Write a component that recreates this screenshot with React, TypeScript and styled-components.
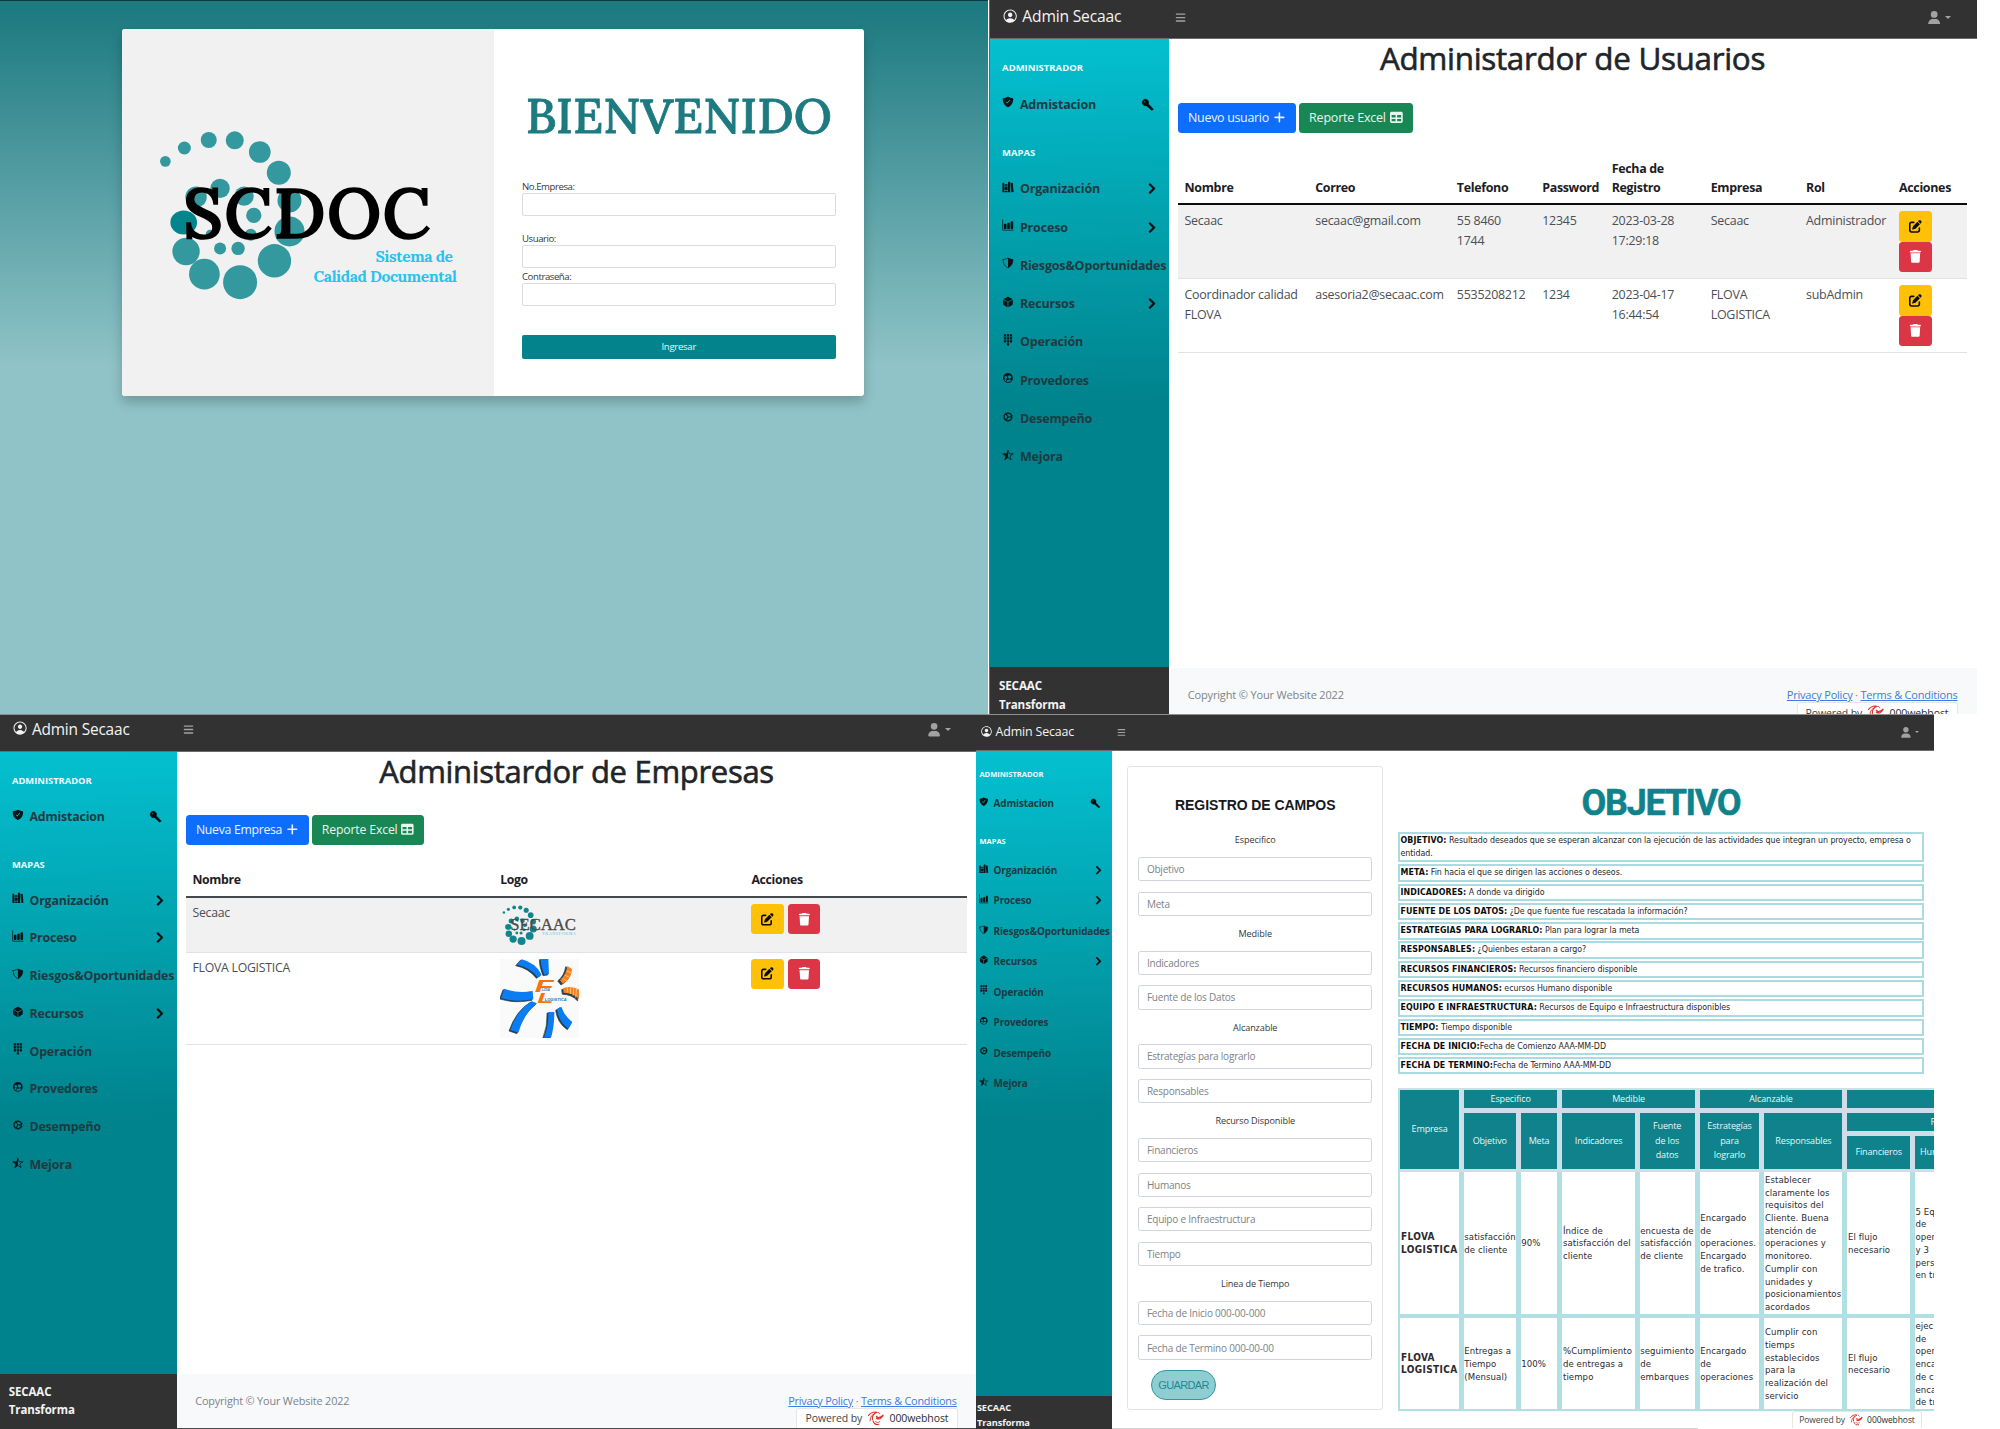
import React from 'react';
import styled, { createGlobalStyle, css } from 'styled-components';
import {
  IoShieldCheckmark, IoLibrarySharp, IoBarChart, IoShieldHalf, IoCube, IoKeypadSharp,
  IoPeopleCircle, IoCog, IoStarHalf, IoKey, IoPersonCircleOutline,
} from 'react-icons/io5';
import { FaTrash, FaPenToSquare, FaTable, FaPlus, FaUser, FaBars, FaAngleRight } from 'react-icons/fa6';

/* One design pixel of the panel it is used in; every Screen sets --u. */
const u = (n: number) => `calc(var(--u) * ${n})`;

const sans = `'Open Sans', 'Noto Sans', sans-serif`;
const serif = `Lora, 'Noto Serif', serif`;
const arial = `'Liberation Sans', Arial, sans-serif`;
const tahoma = `'DejaVu Sans Condensed', 'DejaVu Sans', sans-serif`;

const GlobalStyle = createGlobalStyle`
  *, *::before, *::after { box-sizing: border-box; }
  body { margin: 0; background: #fff; font-family: ${sans}; }
  svg { display: block; flex: none; }
`;

const Board = styled.div`
  width: 2000px;
  height: 1429px;
  display: flex;
  flex-direction: column;
  overflow: hidden;
  background: #fff;
`;

const BoardRow = styled.div<{ $h: number }>`
  display: flex;
  height: ${(p) => p.$h}px;
`;

/* ---------- Login ---------- */

const LoginPage = styled.section`
  width: 988px;
  height: 100%;
  padding: 28px 0 0 121.5px;
  border-top: 1px solid #0c3b3d;
  background: linear-gradient(180deg, #1c7a80 0, #1c7a80 8px, #8fc3c7 365px);
`;

const LoginCard = styled.div`
  display: flex;
  width: 742.5px;
  height: 367px;
  border-radius: 3px;
  overflow: hidden;
  background: #fff;
  box-shadow: 0 6px 12px rgba(0, 0, 0, 0.22);
`;

const LogoPane = styled.div`
  width: 372px;
  padding: 102px 0 0 38.5px;
  background: #f1f1f1;
`;

const FormPane = styled.form`
  flex: 1;
  display: flex;
  flex-direction: column;
  padding: 54.5px 28.5px 0 28.5px;
`;

const Welcome = styled.h1`
  margin: 0 0 34px;
  font: 500 48.5px/62px ${serif};
  color: #1c7a80;
  text-align: center;
  white-space: nowrap;
  letter-spacing: 0;
  -webkit-text-stroke: 0.8px #1c7a80;
`;

const Label = styled.label`
  font-size: 9.6px;
  line-height: 13px;
  height: 13.4px;
  letter-spacing: -0.045em;
  color: #33393e;
`;

const LoginInput = styled.input<{ $gap: number }>`
  height: 23px;
  margin: 0 0 ${(p) => p.$gap}px;
  border: 1px solid #d8dddf;
  border-radius: 2px;
  background: #fff;
  outline: none;
`;

const EnterButton = styled.button`
  height: 24px;
  padding: 0;
  border: 0;
  border-radius: 2px;
  background: #03848c;
  color: #e9f6f7;
  font: 400 9.6px/24px ${sans};
  letter-spacing: -0.03em;
`;

const SPIRAL: [number, number, number][] = [
  [196, 486, 16], [253, 446, 19.5], [326, 422, 24], [404, 423, 27], [479, 458, 32.5], [536, 520, 36],
  [568, 603, 36], [568, 696, 45], [523, 784, 50], [420, 848, 51], [313, 824, 46], [258, 756, 41],
  [288, 593, 32], [360, 567, 29], [432, 590, 29], [461, 648, 23], [452, 706, 18], [414, 747, 20],
  [360, 747, 18], [330, 704, 13],
];

const Spiral = ({ color, accent }: { color: string; accent: string }) => (
  <g fill={color}>
    {SPIRAL.map(([cx, cy, r]) => <circle key={`${cx}-${cy}`} cx={cx} cy={cy} r={r} />)}
    <ellipse cx={251} cy={669} rx={40} ry={36} fill={accent} />
  </g>
);

const ScdocLogo = () => (
  <svg width="297" height="168.5" viewBox="180 395 890 505">
    <Spiral color="#33999f" accent="#03858d" />
    <text x="249" y="715" fontFamily="Lora, serif" fontSize="207" fontWeight="500" textLength="742" fill="#000" stroke="#000" strokeWidth="5">SCDOC</text>
    <text x="826" y="787" fontFamily="Lora, serif" fontSize="47" fontWeight="700" textLength="232" fill="#29c1f2">Sistema de</text>
    <text x="640" y="848" fontFamily="Lora, serif" fontSize="47" fontWeight="700" textLength="430" fill="#29c1f2">Calidad Documental</text>
  </svg>
);

const Login = () => (
  <LoginPage>
    <LoginCard>
      <LogoPane><ScdocLogo /></LogoPane>
      <FormPane>
        <Welcome>BIENVENIDO</Welcome>
        <Label>No.Empresa:</Label>
        <LoginInput $gap={15.8} />
        <Label>Usuario:</Label>
        <LoginInput $gap={1.6} />
        <Label>Contraseña:</Label>
        <LoginInput $gap={29} />
        <EnterButton type="button">Ingresar</EnterButton>
      </FormPane>
    </LoginCard>
  </LoginPage>
);

/* ---------- Admin shell ---------- */

const Screen = styled.section<{ $u: number; $w: number; $line?: boolean; $edge?: string }>`
  --u: ${(p) => p.$u}px;
  width: ${(p) => p.$w}px;
  height: 100%;
  display: flex;
  flex-direction: column;
  overflow: hidden;
  background: #fff;
  font-family: ${sans};
  ${(p) => p.$line && css`border-top: 1px solid #8f8f8f;`}
  ${(p) => p.$edge && css`border-left: 1px solid ${p.$edge};`}
`;

const TopBar = styled.header<{ $h: number; $lift: number; $crop: number }>`
  flex: none;
  display: flex;
  align-items: center;
  height: ${(p) => p.$h}px;
  padding: 0 ${(p) => u(32 - p.$crop * 0.8)} ${(p) => p.$lift}px ${(p) => u(15.5 - p.$crop)};
  background: #323232;
  border-bottom: 1px solid #6b6b6b;
  color: #a2a2a2;
`;

const Brand = styled.div`
  display: flex;
  align-items: center;
  width: ${u(217)};
  gap: ${u(4.6)};
  color: #f4f4f4;
  font-size: ${u(19.6)};
  letter-spacing: -0.012em;
  line-height: 1;
  white-space: nowrap;
  & > svg { width: ${u(20.5)}; height: ${u(20.5)}; margin-bottom: ${u(4)}; }
`;

const MenuToggle = styled.div`
  flex: 1;
  font-size: ${u(14)};
`;

const UserMenu = styled.div`
  display: flex;
  align-items: center;
  gap: ${u(6)};
  & > svg { width: ${u(15.5)}; height: ${u(17)}; }
`;

const Caret = styled.i`
  border: ${u(4.4)} solid transparent;
  border-top-color: currentColor;
  border-bottom: 0;
`;

const ScreenBody = styled.div`
  flex: 1;
  min-height: 0;
  display: flex;
`;

const Sidebar = styled.nav<{ $w: number }>`
  flex: none;
  width: ${(p) => p.$w}px;
  display: flex;
  flex-direction: column;
  background: linear-gradient(178deg, #04c0d0 0, #00838d 54%, #00838d 100%);
`;

const NavHeading = styled.div<{ $crop: number }>`
  padding: ${u(28)} 0 ${u(12)} ${(p) => u(15.2 - p.$crop)};
  font-size: ${u(11.9)};
  font-weight: 700;
  line-height: ${u(18)};
  color: #f2fdfe;
`;

const NavLink = styled.a<{ $crop: number }>`
  display: flex;
  align-items: center;
  height: ${u(48)};
  padding: 0 ${u(14)} 0 ${(p) => u(15.3 - p.$crop)};
  font-size: ${u(15.7)};
  font-weight: 700;
  letter-spacing: -0.014em;
  white-space: nowrap;
  color: #1f3a3f;
`;

const NavIcon = styled.span`
  width: ${u(22.2)};
  flex: none;
  padding-bottom: ${u(5)};
  font-size: ${u(15)};
  color: #0b1416;
`;

const NavArrow = styled.span<{ $turn?: boolean }>`
  margin-left: auto;
  color: #04080a;
  font-size: ${(p) => u(p.$turn ? 17 : 16.5)};
  ${(p) => p.$turn && css`transform: rotate(-90deg); margin-right: ${u(4)};`}
  & > svg { stroke: currentColor; stroke-width: 24; }
`;

const SideFooter = styled.div<{ $h: number; $pad: number; $crop: number }>`
  flex: none;
  height: ${(p) => p.$h}px;
  margin-top: auto;
  padding: ${(p) => p.$pad}px 0 0 ${(p) => u(11.2 - p.$crop)};
  overflow: hidden;
  background: #323232;
  color: #f3f3f3;
  font-size: ${u(14.6)};
  font-weight: 700;
  line-height: ${u(23.4)};
  letter-spacing: -0.01em;
`;

const Main = styled.main`
  flex: 1;
  min-width: 0;
  display: flex;
  flex-direction: column;
  position: relative;
`;

const LINKS = [
  { label: 'Organización', Icon: IoLibrarySharp, arrow: true },
  { label: 'Proceso', Icon: IoBarChart, arrow: true },
  { label: 'Riesgos&Oportunidades', Icon: IoShieldHalf, arrow: false },
  { label: 'Recursos', Icon: IoCube, arrow: true },
  { label: 'Operación', Icon: IoKeypadSharp, arrow: false },
  { label: 'Provedores', Icon: IoPeopleCircle, arrow: false },
  { label: 'Desempeño', Icon: IoCog, arrow: false },
  { label: 'Mejora', Icon: IoStarHalf, arrow: false },
];

interface ShellProps {
  unit: number;
  width: number;
  bar: number;
  lift: number;
  side: number;
  foot: number;
  footPad: number;
  crop?: number;
  line?: boolean;
  edge?: string;
  children: React.ReactNode;
}

const AdminShell = ({ unit, width, bar, lift, side, foot, footPad, crop = 0, line, edge, children }: ShellProps) => (
  <Screen $u={unit} $w={width} $line={line} $edge={edge}>
    <TopBar $h={bar} $lift={lift} $crop={crop}>
      <Brand><IoPersonCircleOutline />Admin Secaac</Brand>
      <MenuToggle><FaBars /></MenuToggle>
      <UserMenu><FaUser /><Caret /></UserMenu>
    </TopBar>
    <ScreenBody>
      <Sidebar $w={side}>
        <NavHeading $crop={crop}>ADMINISTRADOR</NavHeading>
        <NavLink $crop={crop}>
          <NavIcon><IoShieldCheckmark /></NavIcon>Admistacion
          <NavArrow $turn><IoKey /></NavArrow>
        </NavLink>
        <NavHeading $crop={crop}>MAPAS</NavHeading>
        {LINKS.map(({ label, Icon, arrow }) => (
          <NavLink key={label} $crop={crop}>
            <NavIcon><Icon /></NavIcon>{label}
            {arrow && <NavArrow><FaAngleRight /></NavArrow>}
          </NavLink>
        ))}
        <SideFooter $h={foot} $pad={footPad} $crop={crop}>SECAAC<br />Transforma</SideFooter>
      </Sidebar>
      <Main>{children}</Main>
    </ScreenBody>
  </Screen>
);

/* ---------- Shared content ---------- */

const Content = styled.div<{ $left: number; $right: number }>`
  flex: 1;
  min-height: 0;
  padding: 0 ${(p) => p.$right}px 0 ${(p) => p.$left}px;
`;

const Title = styled.h1`
  margin: 0 0 ${u(31.2)};
  font-size: ${u(39.4)};
  font-weight: 500;
  line-height: ${u(48.5)};
  letter-spacing: -0.01em;
  text-align: center;
  color: #212529;
  -webkit-text-stroke: 0.6px #212529;
`;

const Toolbar = styled.div<{ $gap: number }>`
  display: flex;
  gap: 3.4px;
  margin-bottom: ${(p) => p.$gap}px;
`;

const tones = {
  blue: ['#0d6efd', '#eaf2ff'],
  green: ['#198754', '#eaf5ef'],
  yellow: ['#ffc107', '#0b0b0b'],
  red: ['#dc3545', '#fff'],
};

const Button = styled.button<{ $tone: keyof typeof tones }>`
  display: inline-flex;
  align-items: center;
  gap: ${u(5)};
  height: ${u(38)};
  padding: 0 ${u(12.6)};
  border: 0;
  border-radius: ${u(4.5)};
  background: ${(p) => tones[p.$tone][0]};
  color: ${(p) => tones[p.$tone][1]};
  font-family: ${sans};
  font-size: ${u(15.6)};
  letter-spacing: ${(p) => (p.$tone === 'green' ? '-0.014em' : '-0.024em')};
  white-space: nowrap;
  & > svg { font-size: ${u(16)}; }
`;

const GridRow = styled.div<{ $cols: string; $kind?: 'head' | 'odd' | 'even'; $rule?: string }>`
  display: grid;
  grid-template-columns: ${(p) => p.$cols};
  font-size: ${u(15.6)};
  line-height: ${u(24)};
  letter-spacing: -0.02em;
  white-space: pre;
  color: #4a4f54;
  border-bottom: 1px solid #dfe2e6;
  background: ${(p) => (p.$kind === 'odd' ? '#f1f1f1' : 'transparent')};
  ${(p) => p.$kind === 'head' && css`
    align-items: end;
    font-weight: 700;
    letter-spacing: -0.026em;
    color: #1c2024;
    border-bottom: 2px solid ${p.$rule};
  `}
`;

const Cell = styled.div`
  padding: ${u(7.6)} ${u(7.6)} ${u(8)} ${u(8.2)};
`;

const Actions = styled.div<{ $stack?: boolean }>`
  display: flex;
  flex-direction: ${(p) => (p.$stack ? 'column' : 'row')};
  align-items: flex-start;
  gap: ${(p) => (p.$stack ? '0' : '3.3px')};
  & > :first-child > svg { margin-right: ${u(0.8)}; }
`;

const RowActions = ({ stack }: { stack?: boolean }) => (
  <Actions $stack={stack}>
    <Button $tone="yellow"><FaPenToSquare /></Button>
    <Button $tone="red"><FaTrash /></Button>
  </Actions>
);

const PageFooter = styled.footer<{ $h: number }>`
  flex: none;
  display: flex;
  justify-content: space-between;
  height: ${(p) => p.$h}px;
  padding: ${u(26.6)} ${u(24.5)} 0 ${u(23.5)};
  overflow: hidden;
  background: #f8f9fa;
  font-size: ${u(13.8)};
  line-height: ${u(15)};
  letter-spacing: -0.014em;
  color: #7d8489;
  & span + span { letter-spacing: -0.02em; }
  & a { color: #3f7be0; text-decoration: underline; text-underline-offset: 1px; }
`;

/* The hosting badge floats over the bottom-right corner of the page. */
const HostBadge = styled.div<{ $right: number; $bottom: number; $w: number; $fs: number }>`
  position: absolute;
  right: ${(p) => p.$right}px;
  bottom: ${(p) => p.$bottom}px;
  display: flex;
  align-items: center;
  justify-content: center;
  gap: ${(p) => p.$fs * 0.45}px;
  width: ${(p) => p.$w}px;
  height: ${(p) => p.$fs * 1.95}px;
  border: 1px solid #e6e6e6;
  border-bottom: 0;
  border-radius: 3px 3px 0 0;
  background: #fff;
  font-size: ${(p) => p.$fs}px;
  line-height: 1;
  letter-spacing: -0.01em;
  white-space: nowrap;
  color: #444;
  & b { font-weight: 500; color: #2c2c2c; }
`;

const HostMark = ({ size }: { size: number }) => (
  <svg width={size * 1.7} height={size * 1.4} viewBox="0 0 36 30" fill="none" stroke="#d6382f" strokeLinecap="round">
    <path d="M3 9C8 2 18 1 20 3C14 4 10 10 11 17" strokeWidth="2.4" />
    <path d="M6 20C6 12 10 7 15 6" strokeWidth="2" />
    <path d="M12 20C14 26 18 29 24 27" strokeWidth="2.4" />
    <path d="M17 21C19 24 23 24 26 22" strokeWidth="1.8" />
    <path d="M19 11C21 15 28 14 33 8C31 15 24 18 19 15" strokeWidth="2.6" />
    <path d="M23 3L26 6" strokeWidth="1.8" />
  </svg>
);

const Badge = ({ right, bottom, w, fs }: { right: number; bottom: number; w: number; fs: number }) => (
  <HostBadge $right={right} $bottom={bottom} $w={w} $fs={fs}>
    Powered by <HostMark size={fs} /> <b>000webhost</b>
  </HostBadge>
);

const SiteFooter = ({ h }: { h: number }) => (
  <PageFooter $h={h}>
    <span>Copyright © Your Website 2022</span>
    <span><a>Privacy Policy</a> · <a>Terms &amp; Conditions</a></span>
  </PageFooter>
);

/* ---------- Usuarios ---------- */

const USER_COLS = '130.7px 141.6px 85.4px 69.5px 99px 95.3px 93px 1fr';
const USER_HEAD = ['Nombre', 'Correo', 'Telefono', 'Password', 'Fecha de\nRegistro', 'Empresa', 'Rol', 'Acciones'];
const USERS = [
  ['Secaac', 'secaac@gmail.com', '55 8460\n1744', '12345', '2023-03-28\n17:29:18', 'Secaac', 'Administrador'],
  ['Coordinador calidad\nFLOVA', 'asesoria2@secaac.com', '5535208212', '1234', '2023-04-17\n16:44:54', 'FLOVA\nLOGISTICA', 'subAdmin'],
];

const Users = () => (
  <AdminShell unit={0.7975} width={988} bar={39} lift={3.4} side={179} foot={47} footPad={9.9} edge="#2f8a56">
    <Content $left={9} $right={10}>
      <Title>Administardor de Usuarios</Title>
      <Toolbar $gap={19.8}>
        <Button $tone="blue">Nuevo usuario<FaPlus /></Button>
        <Button $tone="green">Reporte Excel<FaTable /></Button>
      </Toolbar>
      <GridRow $cols={USER_COLS} $kind="head" $rule="#0a0c0e">
        {USER_HEAD.map((h) => <Cell key={h}>{h}</Cell>)}
      </GridRow>
      {USERS.map((row, i) => (
        <GridRow key={row[0]} $cols={USER_COLS} $kind={i ? 'even' : 'odd'}>
          {row.map((v, j) => <Cell key={j}>{v}</Cell>)}
          <Cell><RowActions stack /></Cell>
        </GridRow>
      ))}
    </Content>
    <SiteFooter h={46} />
    <Badge right={19.5} bottom={-8.5} w={161} fs={10.5} />
  </AdminShell>
);

/* ---------- Empresas ---------- */

const SecaacLogo = () => (
  <svg width="78" height="41" viewBox="0 0 234 123">
    <g transform="translate(8 4) scale(.236) translate(-180 -395)"><Spiral color="#12858c" accent="#12858c" /></g>
    <text x="31" y="78" fontFamily="'Liberation Serif', serif" fontSize="50" textLength="196" fill="#4a4a4a" stroke="#4a4a4a" strokeWidth="1">SECAAC</text>
    <text x="126" y="92" fontFamily="'Liberation Serif', serif" fontSize="12" fontWeight="700" textLength="101" fill="#7fd6ea">TRANSFORMA</text>
  </svg>
);

const BLADES = [
  'M50 18L64 2Q105 12 124 48L112 56Q90 26 50 18Z',
  'M121 0L144 0L146 46L132 48Q121 22 121 0Z',
  'M2 118L12 90Q50 105 97 97L99 122Q50 132 2 118Z',
  'M30 214Q50 155 94 128L110 134Q70 165 54 222Z',
  'M144 160L162 160Q162 205 152 237L131 237Q146 200 144 160Z',
  'M170 152L183 144Q192 172 216 190L205 210Q175 190 170 152Z',
];

const FlovaLogo = () => (
  <svg width="79" height="79" viewBox="0 0 237 237">
    <rect width="237" height="237" fill="#fafafa" />
    <g transform="translate(-3 2)" fill="#24404a" stroke="#24404a" strokeWidth="2">
      {BLADES.map((d) => <path key={d} d={d} />)}
      <path d="M176 64Q196 48 200 21L214 30Q216 60 186 76Z" />
      <path d="M188 90Q215 80 236 94L236 124Q218 104 190 104Z" />
    </g>
    <g transform="translate(1 -1)" fill="#0a7df5">{BLADES.map((d) => <path key={d} d={d} />)}</g>
    <g fill="#f58220">
      <path d="M180 64Q199 46 202 21L216 30Q217 58 188 74Z" />
      <path d="M189 88Q215 78 238 92L238 121Q218 101 191 101Z" />
    </g>
    <path d="M188 58l14 10M194 48l15 8M200 36l15 6M202 82l0 18M212 82l-1 22M222 84l-3 26M230 88l-3 28" stroke="#ffd9b0" strokeWidth="2" />
    <g fontFamily="'Liberation Sans', sans-serif" fontWeight="700" fontStyle="italic">
      <text x="104" y="99" fontSize="47" textLength="56" lengthAdjust="spacingAndGlyphs" fill="#f9730c">F</text>
      <text x="112" y="131" fontSize="45" textLength="48" lengthAdjust="spacingAndGlyphs" fill="#f9730c">L</text>
      <text x="126" y="95" fontSize="9" fill="#1b76b8">LOVA</text>
      <text x="134" y="125" fontSize="12" textLength="66" fill="#1b76b8">LOGISTICA</text>
    </g>
  </svg>
);

const COMPANY_COLS = '307.7px 251.3px 1fr';

const BottomEdge = styled.div<{ $w?: string; $color: string }>`
  flex: none;
  height: 1px;
  width: ${(p) => p.$w ?? '100%'};
  background: ${(p) => p.$color};
`;

const Companies = () => (
  <AdminShell unit={0.7875} width={976} bar={37} lift={6.2} side={176.7} foot={55} footPad={9} line>
    <Content $left={9.3} $right={9}>
      <Title>Administardor de Empresas</Title>
      <Toolbar $gap={20.6}>
        <Button $tone="blue">Nueva Empresa<FaPlus /></Button>
        <Button $tone="green">Reporte Excel<FaTable /></Button>
      </Toolbar>
      <GridRow $cols={COMPANY_COLS} $kind="head" $rule="#46494c">
        <Cell>Nombre</Cell><Cell>Logo</Cell><Cell>Acciones</Cell>
      </GridRow>
      <GridRow $cols={COMPANY_COLS} $kind="odd">
        <Cell>Secaac</Cell><Cell><SecaacLogo /></Cell><Cell><RowActions /></Cell>
      </GridRow>
      <GridRow $cols={COMPANY_COLS} $kind="even">
        <Cell>FLOVA LOGISTICA</Cell><Cell><FlovaLogo /></Cell><Cell><RowActions /></Cell>
      </GridRow>
    </Content>
    <SiteFooter h={54} />
    <BottomEdge $color="#4a4a4a" />
    <Badge right={18} bottom={1} w={162} fs={10.5} />
  </AdminShell>
);

/* ---------- Objetivo ---------- */

const ObjectiveBody = styled.div`
  flex: 1;
  min-height: 0;
  display: flex;
  align-items: flex-start;
  gap: 15.4px;
  padding: 15px 0 0 15.3px;
  overflow: hidden;
`;

const FieldCard = styled.form`
  flex: none;
  width: 255.7px;
  height: 643.5px;
  padding: 26.2px 10px 0 10.2px;
  border: 1px solid #e3e3e3;
  border-radius: 3px;
  background: #fff;
`;

const CardTitle = styled.h2`
  margin: 0 0 15.4px;
  font: 700 14px/24px ${arial};
  letter-spacing: -0.08px;
  text-align: center;
  color: #16191c;
`;

const FieldGroup = styled.div`
  height: 24.5px;
  padding-top: 0.7px;
  font-size: 9.1px;
  line-height: 14px;
  letter-spacing: -0.012em;
  text-align: center;
  color: #33383c;
`;

const Field = styled.input`
  display: block;
  width: 100%;
  height: 24.2px;
  margin: 0 0 10.4px;
  padding: 0 7.4px;
  border: 1px solid #ced4da;
  border-radius: 2.5px;
  outline: none;
  background: #fff;
  font: 400 10px/22px ${sans};
  letter-spacing: -0.021em;
  &::placeholder { color: #7b8389; opacity: 1; }
`;

const SaveButton = styled.button`
  display: block;
  width: 65px;
  height: 29.5px;
  margin: 0 0 0 12.5px;
  padding: 0;
  border: 1px solid #2b9aa3;
  border-radius: 15px;
  background: #8fcdd2;
  color: #1b8a93;
  font: 400 11px/26px ${arial};
  letter-spacing: -0.65px;
`;

const ObjectiveMain = styled.div`
  flex: 1;
  min-width: 0;
  overflow: hidden;
`;

const BigTitle = styled.h1`
  width: 525px;
  margin: 15.5px 0 8.8px;
  font: 700 36px/42px Roboto, sans-serif;
  letter-spacing: -1.35px;
  text-align: center;
  color: #0f828b;
  -webkit-text-stroke: 0.5px #0f828b;
`;

const Definition = styled.p`
  width: 525.3px;
  margin: 0 0 1.9px;
  padding: 0 0 0.7px 0.2px;
  border: 2px solid #a9dbe0;
  font: 400 8.8px/12.7px ${tahoma};
  letter-spacing: -0.066px;
  color: #26262a;
  & b { color: #0c0c0e; letter-spacing: 0.08px; }
`;

const ObjectiveTable = styled.div`
  width: 700px;
  margin-top: 13.4px;
  border: 2px solid #b0e0e3;
  border-top-color: #cfdfe8;
`;

const SHEET_COLS = '58.4px 51.9px 36.8px 72.2px 55px 59.8px 78px 62.5px 50px 1fr';

const SheetHead = styled.div`
  display: grid;
  grid-template-columns: ${SHEET_COLS};
  grid-template-rows: 18px 18.4px 32.4px;
  gap: 5px;
  padding: 0 0 3.8px;
  background: #cfdde8;
`;

const HeadCell = styled.div<{ $area: string; $start?: boolean }>`
  grid-area: ${(p) => p.$area};
  display: flex;
  align-items: center;
  justify-content: ${(p) => (p.$start ? 'flex-start' : 'center')};
  padding-left: ${(p) => (p.$start ? '83px' : '0')};
  background: #0f828b;
  color: #eaf6f7;
  font-size: 9px;
  line-height: 14.3px;
  letter-spacing: -0.015em;
  text-align: center;
  white-space: pre;
`;

const SheetRow = styled.div<{ $h: number }>`
  display: grid;
  grid-template-columns: ${SHEET_COLS};
  gap: 5px;
  height: ${(p) => p.$h}px;
  background: #b0e0e3;
`;

const RowRule = styled.div`
  height: 4.6px;
  background: #b0e0e3;
`;

const SheetCell = styled.div<{ $bold?: boolean }>`
  display: flex;
  align-items: center;
  padding: 1.6px 0 0 0.5px;
  background: #fff;
  color: #2b2b2f;
  font: ${(p) => (p.$bold ? '700 10px' : '400 9.5px')}/12.68px ${tahoma};
  letter-spacing: ${(p) => (p.$bold ? '0.38px' : '0.09px')};
  white-space: pre;
`;

const FIELDS: [string, string[]][] = [
  ['Especifico', ['Objetivo', 'Meta']],
  ['Medible', ['Indicadores', 'Fuente de los Datos']],
  ['Alcanzable', ['Estrategías para lograrlo', 'Responsables']],
  ['Recurso Disponible', ['Financieros', 'Humanos', 'Equipo e Infraestructura', 'Tiempo']],
  ['Linea de Tiempo', ['Fecha de Inicio 000-00-000', 'Fecha de Termino 000-00-00']],
];

const DEFINITIONS: [string, string][] = [
  ['OBJETIVO:', ' Resultado deseados que se esperan alcanzar con la ejecución de las actividades que integran un proyecto, empresa o entidad.'],
  ['META:', ' Fin hacia el que se dirigen las acciones o deseos.'],
  ['INDICADORES:', ' A donde va dirigido'],
  ['FUENTE DE LOS DATOS:', ' ¿De que fuente fue rescatada la información?'],
  ['ESTRATEGIAS PARA LOGRARLO:', ' Plan para lograr la meta'],
  ['RESPONSABLES:', ' ¿Quienbes estaran a cargo?'],
  ['RECURSOS FINANCIEROS:', ' Recursos financiero disponible'],
  ['RECURSOS HUMANOS:', ' ecursos Humano disponible'],
  ['EQUIPO E INFRAESTRUCTURA:', ' Recursos de Equipo e Infraestructura disponibles'],
  ['TIEMPO:', ' Tiempo disponible'],
  ['FECHA DE INICIO:', 'Fecha de Comienzo AAA-MM-DD'],
  ['FECHA DE TERMINO:', 'Fecha de Termino AAA-MM-DD'],
];

const HEADS: [string, string][] = [
  ['Empresa', '1 / 1 / 4 / 2'],
  ['Especifico', '1 / 2 / 2 / 4'],
  ['Medible', '1 / 4 / 2 / 6'],
  ['Alcanzable', '1 / 6 / 2 / 8'],
  ['', '1 / 8 / 2 / 11'],
  ['Objetivo', '2 / 2 / 4 / 3'],
  ['Meta', '2 / 3 / 4 / 4'],
  ['Indicadores', '2 / 4 / 4 / 5'],
  ['Fuente\nde los\ndatos', '2 / 5 / 4 / 6'],
  ['Estrategías\npara\nlograrlo', '2 / 6 / 4 / 7'],
  ['Responsables', '2 / 7 / 4 / 8'],
  ['Recurso', '2 / 8 / 3 / 11'],
  ['Financieros', '3 / 8 / 4 / 9'],
  ['Humanos', '3 / 9 / 4 / 10'],
  ['', '3 / 10 / 4 / 11'],
];

const SHEET: { h: number; cells: string[] }[] = [
  {
    h: 141,
    cells: ['FLOVA\nLOGISTICA', 'satisfacción\nde cliente', '90%', 'Índice de\nsatisfacción del\ncliente',
      'encuesta de\nsatisfacción\nde cliente', 'Encargado\nde\noperaciones.\nEncargado\nde trafico.',
      'Establecer\nclaramente los\nrequisitos del\nCliente. Buena\natención de\noperaciones y\nmonitoreo.\nCumplir con\nunidades y\nposicionamientos\nacordados',
      'El flujo\nnecesario', '5 Equipos\nde\noperación\ny 3\npersonas\nen trafico', ''],
  },
  {
    h: 91.3,
    cells: ['FLOVA\nLOGISTICA', 'Entregas a\nTiempo\n(Mensual)', '100%', '%Cumplimiento\nde entregas a\ntiempo',
      'seguimiento\nde\nembarques', 'Encargado\nde\noperaciones',
      'Cumplir con\ntiemps\nestablecidos\npara la\nrealización del\nservicio',
      'El flujo\nnecesario', 'ejecutivo\nde\noperación\nencargado\nde control\nencargado\nde trafico', ''],
  },
];

const Objective = () => (
  <AdminShell unit={0.6335} width={958} bar={36} lift={0} side={136} foot={33} footPad={5} crop={9.8} line>
    <ObjectiveBody>
      <FieldCard>
        <CardTitle>REGISTRO DE CAMPOS</CardTitle>
        {FIELDS.map(([group, names]) => (
          <React.Fragment key={group}>
            <FieldGroup>{group}</FieldGroup>
            {names.map((n) => <Field key={n} placeholder={n} />)}
          </React.Fragment>
        ))}
        <SaveButton type="button">GUARDAR</SaveButton>
      </FieldCard>
      <ObjectiveMain>
        <BigTitle>OBJETIVO</BigTitle>
        {DEFINITIONS.map(([k, v]) => <Definition key={k}><b>{k}</b>{v}</Definition>)}
        <ObjectiveTable>
          <SheetHead>
            {HEADS.map(([t, area]) => <HeadCell key={area} $area={area} $start={t === 'Recurso'}>{t}</HeadCell>)}
          </SheetHead>
          {SHEET.map((row, r) => (
            <React.Fragment key={r}>
              {r > 0 && <RowRule />}
              <SheetRow $h={row.h}>
                {row.cells.map((c, i) => <SheetCell key={i} $bold={i === 0}>{c}</SheetCell>)}
              </SheetRow>
            </React.Fragment>
          ))}
        </ObjectiveTable>
      </ObjectiveMain>
    </ObjectiveBody>
    <BottomEdge $color="#d2d2d2" $w="586px" />
    <Badge right={12} bottom={1} w={130} fs={8.5} />
  </AdminShell>
);

const Gap = styled.div`
  width: 1px;
  background: #fff;
`;

export default function App() {
  return (
    <>
      <GlobalStyle />
      <Board>
        <BoardRow $h={714}>
          <Login />
          <Gap />
          <Users />
        </BoardRow>
        <BoardRow $h={715}>
          <Companies />
          <Objective />
        </BoardRow>
      </Board>
    </>
  );
}
